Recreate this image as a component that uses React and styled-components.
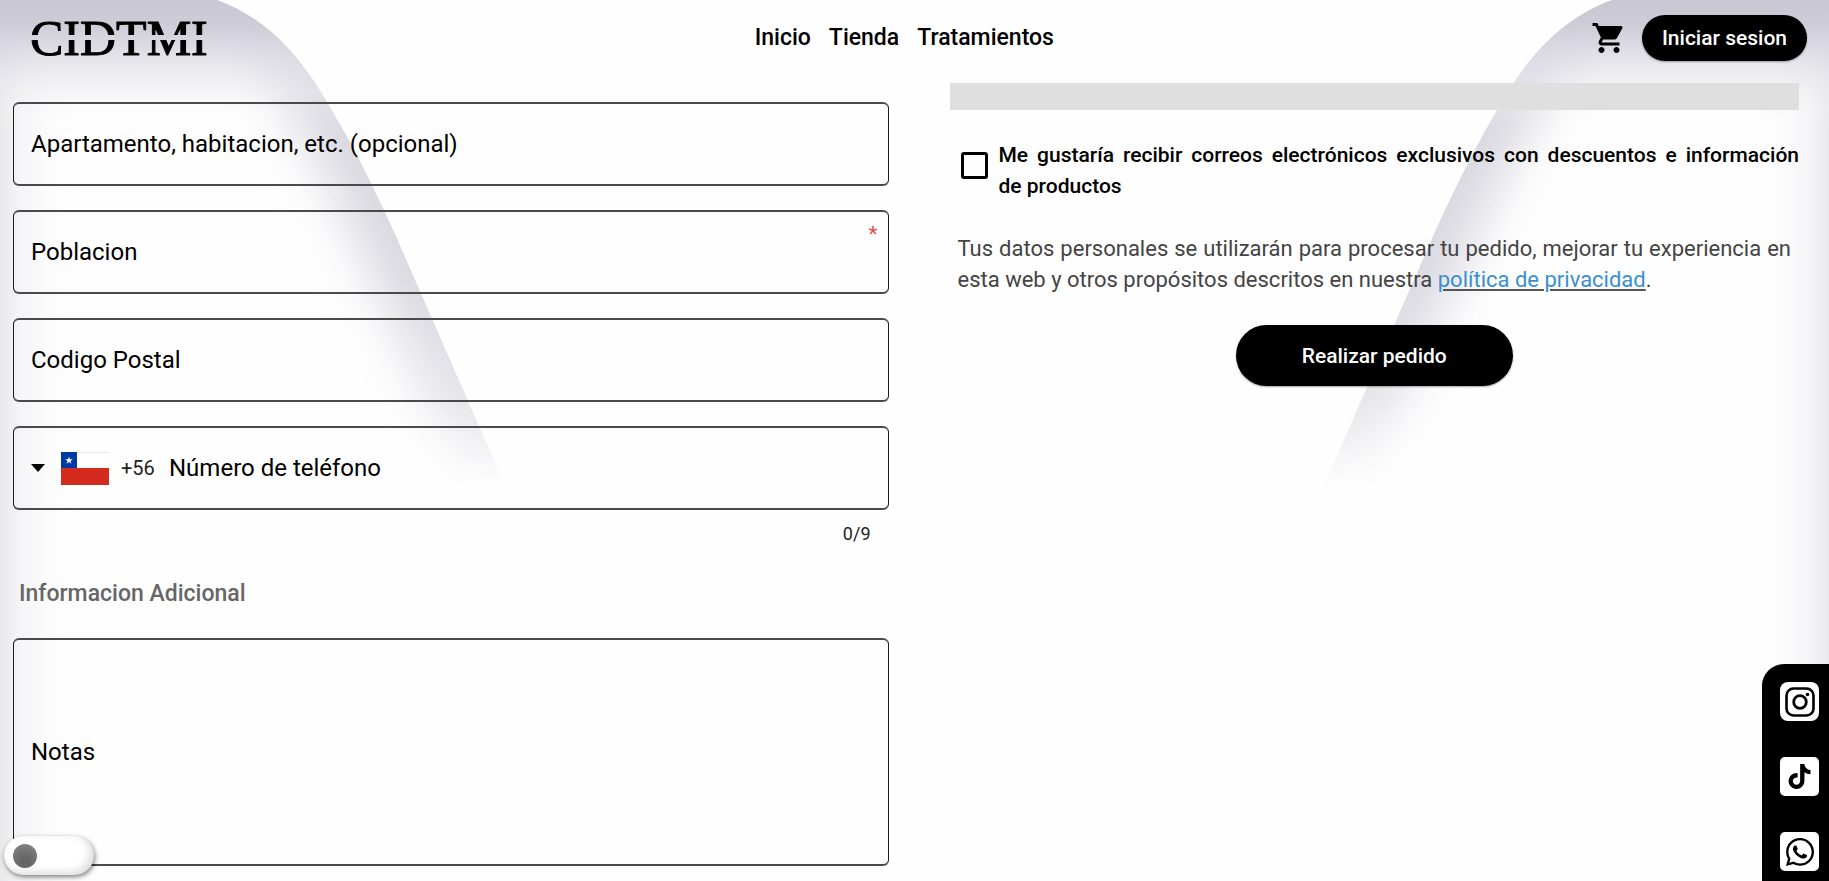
import React, { useState } from 'react';
import styled, { createGlobalStyle } from 'styled-components';
import { MdShoppingCart } from 'react-icons/md';
import { FaWhatsapp, FaTiktok } from 'react-icons/fa';

const GlobalStyle = createGlobalStyle`
  *, *::before, *::after { box-sizing: border-box; }
  body {
    margin: 0;
    background: #fefefe;
    color: #000;
    font-family: Roboto, "Liberation Sans", sans-serif;
    font-size: 22px;
  }
  button, input, textarea, select { font: inherit; color: inherit; }
`;

const Page = styled.div`
  position: relative;
  isolation: isolate;
  min-height: 100vh;
  overflow: hidden;
`;

const Backdrop = styled.div`
  position: absolute;
  inset: 0;
  z-index: -1;
  background:
    linear-gradient(to right, #e9e9ed, #f5f5f7 20px, #fbfbfc 45px, transparent 75px),
    linear-gradient(to left, #e9e9ed, #f5f5f7 20px, #fbfbfc 45px, transparent 75px);
`;

const Wave = styled.svg`
  position: absolute;
  top: 0;
  left: ${({ $mirrored }) => ($mirrored ? 'auto' : 0)};
  right: ${({ $mirrored }) => ($mirrored ? 0 : 'auto')};
  transform: ${({ $mirrored }) => ($mirrored ? 'scaleX(-1)' : 'none')};
`;

const Header = styled.header`
  display: flex;
  align-items: center;
  justify-content: space-between;
  height: 76px;
  padding: 0 22px 0 30px;
`;

const Logo = styled.a`
  padding-right: 10px;
  color: #000;
  font-family: "Liberation Serif", serif;
  font-size: 50px;
  line-height: 56px;
  text-decoration: none;
  -webkit-text-stroke: 1px #000;
  mask-image: linear-gradient(#000 25px, transparent 25px, transparent 30px, #000 30px);
`;

const Nav = styled.nav`
  display: flex;
  gap: 18px;
`;

const NavLink = styled.a`
  color: #000;
  font-size: 23px;
  font-weight: 500;
  line-height: 32px;
  text-decoration: none;
`;

const Account = styled.div`
  display: flex;
  align-items: center;
  gap: 15px;
`;

const CartButton = styled.button`
  display: flex;
  padding: 0;
  border: 0;
  background: none;
`;

const PillButton = styled.button`
  height: ${({ $large }) => ($large ? 61 : 46)}px;
  padding: 0 ${({ $large }) => ($large ? 66 : 20)}px;
  border: 0;
  border-radius: 31px;
  background: #000;
  color: #fff;
  font-size: 21px;
  font-weight: 500;
  box-shadow: 0 1px 2px rgba(0, 0, 0, 0.35);
`;

const Checkout = styled.main`
  display: grid;
  grid-template-columns: 1fr 1fr;
`;

const FormColumn = styled.section`
  display: flex;
  flex-direction: column;
  padding: 26px 26px 16px 13px;
`;

const FieldStack = styled.div`
  display: flex;
  flex-direction: column;
  gap: 24px;
`;

const FieldBox = styled.div`
  display: flex;
  align-items: center;
  position: relative;
  height: ${({ $tall }) => ($tall ? 228 : 84)}px;
  padding: 0 17px;
  border-style: solid;
  border-color: #4a4a4a #1c1c1c;
  border-width: 2px 1px;
  border-radius: 6px;
`;

const FieldLabel = styled.label`
  flex: none;
  font-size: 24px;
  line-height: 32px;
`;

const TextInput = styled.input`
  flex: 1;
  min-width: 0;
  height: 100%;
  padding: 0 8px;
  border: 0;
  outline: 0;
  background: none;
  font-size: 24px;
  resize: none;
`;

const Required = styled.span`
  position: absolute;
  top: 10px;
  right: 10px;
  color: #dc5046;
  font-size: 21px;
  line-height: 24px;
`;

const CountryPicker = styled.div`
  display: flex;
  align-items: center;
  flex: none;
  gap: 16px;
`;

const DialCode = styled.select`
  width: 48px;
  margin-left: -4px;
  padding: 0;
  border: 0;
  outline: 0;
  appearance: none;
  background: none;
  color: #222;
  font-size: 20px;
`;

const Counter = styled.p`
  margin: 13px 18px 0;
  color: #222;
  font-size: 18px;
  line-height: 22px;
  text-align: right;
`;

const SectionTitle = styled.h2`
  margin: 33px 6px 28px;
  color: #666;
  font-size: 23px;
  font-weight: 500;
  line-height: 32px;
`;

const OrderColumn = styled.section`
  display: flex;
  flex-direction: column;
  padding: 7px 30px 16px 35px;
`;

const SummaryBar = styled.div`
  height: 27px;
  background: #dfdfdf;
`;

const Consent = styled.div`
  display: flex;
  align-items: flex-start;
  gap: 11px;
  margin-top: 30px;
  padding-left: 11px;
`;

const CheckBox = styled.input`
  flex: none;
  width: 27px;
  height: 27px;
  margin: 12px 0 0;
  border: 3px solid #000;
  border-radius: 3px;
  appearance: none;
  &:checked { background: #000; }
`;

const ConsentLabel = styled.label`
  font-size: 21px;
  font-weight: 500;
  line-height: 31px;
  text-align: justify;
`;

const Privacy = styled.p`
  margin: 31px 8px 0;
  color: #444;
  line-height: 31px;
  text-align: justify;
`;

const PrivacyLink = styled.a`
  color: #3a8fd0;
  text-decoration: underline #555 2px;
  text-underline-offset: 2px;
`;

const Actions = styled.div`
  display: flex;
  justify-content: center;
  margin-top: 30px;
`;

const SocialBar = styled.nav`
  position: fixed;
  right: 0;
  bottom: 0;
  display: flex;
  flex-direction: column;
  gap: 36px;
  padding: 18px 10px 10px 18px;
  border-radius: 22px 0 0 0;
  background: #000;
`;

const SocialLink = styled.a`
  display: flex;
  align-items: center;
  justify-content: center;
  width: 39px;
  height: 39px;
  border-radius: ${({ $round }) => ($round ? 8 : 5)}px;
  background: #fff;
  color: #000;
`;

const ThemeSwitch = styled.input`
  position: fixed;
  left: 4px;
  bottom: 6px;
  display: flex;
  align-items: center;
  width: 90px;
  height: 39px;
  margin: 0;
  padding: 0 9px;
  border-radius: 20px;
  appearance: none;
  background: #fff;
  box-shadow: 1px 2px 5px rgba(0, 0, 0, 0.5), inset -4px -3px 8px rgba(0, 0, 0, 0.14);
  &::before {
    content: "";
    width: 24px;
    height: 24px;
    border-radius: 50%;
    background: radial-gradient(circle at 50% 75%, #666 20%, #888);
  }
  &:checked { justify-content: flex-end; }
`;

function WaveShape({ mirrored }) {
  const id = mirrored ? 'right' : 'left';
  const curve = 'M217 0C288 26 319 88 345 133C364 167 379 199 395 234L510 497';
  return (
    <Wave $mirrored={mirrored} width="560" height="540" viewBox="0 0 560 540" aria-hidden="true">
      <defs>
        <clipPath id={`clip-${id}`}>
          <path d={`${curve}L0 497V0Z`} />
        </clipPath>
        <linearGradient id={`top-${id}`} x1="0" y1="0" x2="0" y2="1">
          <stop offset="0" stopColor="#c9c8d2" />
          <stop offset="0.2" stopColor="#cecdd7" />
          <stop offset="0.38" stopColor="#d9d8e1" stopOpacity="0.9" />
          <stop offset="0.6" stopColor="#e3e2e9" stopOpacity="0.6" />
          <stop offset="0.8" stopColor="#ececf0" stopOpacity="0.3" />
          <stop offset="1" stopColor="#fff" stopOpacity="0" />
        </linearGradient>
        <linearGradient id={`fade-${id}`} gradientUnits="userSpaceOnUse" x1="0" y1="0" x2="0" y2="497">
          <stop offset="0.55" stopColor="#fff" />
          <stop offset="0.8" stopColor="#b4b4b4" />
          <stop offset="0.98" stopColor="#000" />
        </linearGradient>
        <mask id={`mask-${id}`} maskUnits="userSpaceOnUse" x="0" y="0" width="560" height="540">
          <rect width="560" height="540" fill={`url(#fade-${id})`} />
        </mask>
        <filter
          id={`blur-${id}`}
          filterUnits="userSpaceOnUse"
          x="-60"
          y="-100"
          width="740"
          height="740"
          colorInterpolationFilters="sRGB"
        >
          <feGaussianBlur stdDeviation="24" />
        </filter>
      </defs>
      <g clipPath={`url(#clip-${id})`}>
        <g mask={`url(#mask-${id})`}>
          <path
            d="M255 -40C293 26 324 88 350 133C369 167 384 199 400 234L519 506"
            fill="none"
            stroke="#d9d8e0"
            strokeWidth="84"
            filter={`url(#blur-${id})`}
          />
        </g>
        <rect width="560" height="125" fill={`url(#top-${id})`} />
      </g>
    </Wave>
  );
}

function ChileFlag() {
  return (
    <svg width="48" height="33" viewBox="0 0 48 33" aria-hidden="true">
      <rect width="48" height="33" fill="#fff" />
      <rect width="48" height="1" fill="#eee6e4" />
      <rect y="16" width="48" height="17" fill="#d52b1e" />
      <rect width="16" height="16" fill="#0039a6" />
      <path d="M8 4.5l.9 2.7h2.9l-2.3 1.7.9 2.8L8 10l-2.4 1.7.9-2.8-2.3-1.7h2.9z" fill="#fff" />
    </svg>
  );
}

function InstagramGlyph() {
  return (
    <svg width="30" height="30" viewBox="0 0 30 30" fill="none" stroke="#000" aria-hidden="true">
      <rect x="1.5" y="1.5" width="27" height="27" rx="7" strokeWidth="2.6" />
      <circle cx="15" cy="15" r="6.3" strokeWidth="2.8" />
      <circle cx="22.5" cy="7.5" r="1.8" fill="#000" stroke="none" />
    </svg>
  );
}

function Field({ id, label, required }) {
  return (
    <FieldBox>
      <FieldLabel htmlFor={id}>{label}</FieldLabel>
      <TextInput id={id} type="text" required={required} />
      {required && <Required>*</Required>}
    </FieldBox>
  );
}

export default function App() {
  const [phone, setPhone] = useState('');

  return (
    <Page>
      <GlobalStyle />
      <Backdrop>
        <WaveShape />
        <WaveShape mirrored />
      </Backdrop>

      <Header>
        <Logo href="#inicio">CIDTMI</Logo>
        <Nav>
          <NavLink href="#inicio">Inicio</NavLink>
          <NavLink href="#tienda">Tienda</NavLink>
          <NavLink href="#tratamientos">Tratamientos</NavLink>
        </Nav>
        <Account>
          <CartButton type="button" aria-label="Carrito">
            <MdShoppingCart size={36} />
          </CartButton>
          <PillButton type="button">Iniciar sesion</PillButton>
        </Account>
      </Header>

      <Checkout>
        <FormColumn>
          <FieldStack>
            <Field id="apartamento" label="Apartamento, habitacion, etc. (opcional)" />
            <Field id="poblacion" label="Poblacion" required />
            <Field id="codigo" label="Codigo Postal" />
            <FieldBox>
              <CountryPicker>
                <svg width="14" height="8" viewBox="0 0 14 8" aria-hidden="true">
                  <path d="M0 0h14L7 8z" />
                </svg>
                <ChileFlag />
                <DialCode aria-label="Codigo de pais">
                  <option>+56</option>
                </DialCode>
              </CountryPicker>
              <FieldLabel htmlFor="telefono">Número de teléfono</FieldLabel>
              <TextInput
                id="telefono"
                type="tel"
                maxLength={9}
                value={phone}
                onChange={(event) => setPhone(event.target.value)}
              />
            </FieldBox>
          </FieldStack>
          <Counter>{phone.length}/9</Counter>
          <SectionTitle>Informacion Adicional</SectionTitle>
          <FieldBox $tall>
            <FieldLabel htmlFor="notas">Notas</FieldLabel>
            <TextInput as="textarea" id="notas" />
          </FieldBox>
        </FormColumn>

        <OrderColumn>
          <SummaryBar />
          <Consent>
            <CheckBox type="checkbox" id="correos" />
            <ConsentLabel htmlFor="correos">
              Me gustaría recibir correos electrónicos exclusivos con descuentos e información de&nbsp;productos
            </ConsentLabel>
          </Consent>
          <Privacy>
            Tus datos personales se utilizarán para procesar tu pedido, mejorar tu experiencia en esta web y otros
            propósitos descritos en nuestra <PrivacyLink href="#privacidad">política de privacidad</PrivacyLink>.
          </Privacy>
          <Actions>
            <PillButton type="submit" $large>Realizar pedido</PillButton>
          </Actions>
        </OrderColumn>
      </Checkout>

      <SocialBar aria-label="Redes sociales">
        <SocialLink href="#instagram" aria-label="Instagram" $round>
          <InstagramGlyph />
        </SocialLink>
        <SocialLink href="#tiktok" aria-label="TikTok">
          <FaTiktok size={25} />
        </SocialLink>
        <SocialLink href="#whatsapp" aria-label="WhatsApp">
          <FaWhatsapp size={32} />
        </SocialLink>
      </SocialBar>
      <ThemeSwitch type="checkbox" role="switch" aria-label="Modo oscuro" />
    </Page>
  );
}
